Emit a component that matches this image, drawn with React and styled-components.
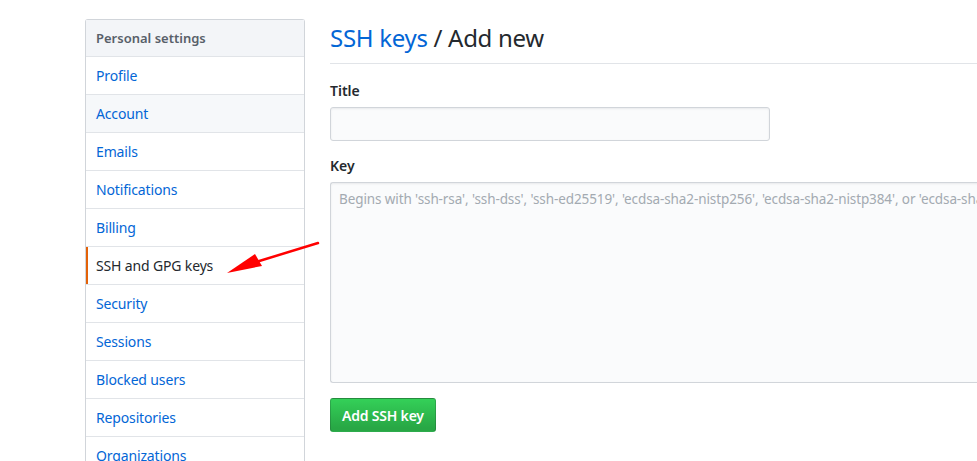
import styled, { createGlobalStyle } from "styled-components";

const GlobalStyle = createGlobalStyle`
  html, body {
    margin: 0;
    padding: 0;
    background: #fff;
    overflow: hidden;
  }
  body {
    font-family: "Noto Sans", "Open Sans", sans-serif;
    font-size: 14px;
    color: #24292e;
  }
`;

const menuItems = [
  "Profile",
  "Account",
  "Emails",
  "Notifications",
  "Billing",
  "SSH and GPG keys",
  "Security",
  "Sessions",
  "Blocked users",
  "Repositories",
  "Organizations",
];

export default function App() {
  return (
    <Page>
      <GlobalStyle />
      <Sidebar>
        <MenuHeading>Personal settings</MenuHeading>
        {menuItems.map((item) => (
          <MenuItem
            key={item}
            $selected={item === "SSH and GPG keys"}
            $hovered={item === "Account"}
          >
            {item}
          </MenuItem>
        ))}
      </Sidebar>

      <Main>
        <Subhead>
          <HeadLink>SSH keys</HeadLink> / Add new
        </Subhead>
        <Form>
          <Field>
            <Label>Title</Label>
            <TitleInput />
          </Field>
          <Field>
            <Label>Key</Label>
            <KeyArea placeholder="Begins with 'ssh-rsa', 'ssh-dss', 'ssh-ed25519', 'ecdsa-sha2-nistp256', 'ecdsa-sha2-nistp384', or 'ecdsa-sha2-nistp521'" />
          </Field>
          <SubmitButton>Add SSH key</SubmitButton>
        </Form>
      </Main>

      <Arrow width="100" height="40" viewBox="0 0 100 40">
        <line x1="92" y1="3" x2="30" y2="22" stroke="#f00" strokeWidth="2.5" strokeLinecap="round" />
        <polygon points="1,33 29,14 36,26" fill="#f00" />
      </Arrow>
    </Page>
  );
}

const Page = styled.div`
  position: relative;
  display: flex;
  gap: 25px;
  padding: 19px 0 0 85px;
  height: 461px;
  box-sizing: border-box;
  width: 1200px;
`;

const Sidebar = styled.nav`
  width: 220px;
  flex-shrink: 0;
  border: 1px solid #d1d5da;
  border-radius: 3px;
  border-bottom: none;
  align-self: flex-start;
  box-sizing: border-box;
`;

const MenuHeading = styled.div`
  height: 37px;
  display: flex;
  align-items: center;
  padding: 0 10px 1px;
  box-sizing: border-box;
  background: #f3f5f8;
  border-bottom: 1px solid #e1e4e8;
  color: #586069;
  font-size: 13px;
  font-weight: 600;
`;

const MenuItem = styled.div`
  height: 38px;
  box-sizing: border-box;
  display: flex;
  align-items: center;
  padding: 0 10px 1px;
  border-bottom: 1px solid #e1e4e8;
  font-size: 14px;
  letter-spacing: -0.15px;
  color: ${(p) => (p.$selected ? "#24292e" : "#0366d6")};
  background: ${(p) => (p.$hovered ? "#f6f8fa" : "#fff")};
  box-shadow: ${(p) => (p.$selected ? "inset 2px 0 0 #e36209" : "none")};
`;

const Main = styled.main`
  flex: 1;
  display: flex;
  flex-direction: column;
`;

const Subhead = styled.h2`
  margin: 0;
  padding: 3px 0 9px;
  border-bottom: 1px solid #e1e4e8;
  font-size: 24px;
  font-weight: 400;
  letter-spacing: -0.3px;
  line-height: 32px;
  color: #24292e;
`;

const HeadLink = styled.span`
  color: #0366d6;
`;

const Form = styled.div`
  display: flex;
  flex-direction: column;
  align-items: flex-start;
  padding-top: 17px;
`;

const Field = styled.div`
  display: flex;
  flex-direction: column;
  align-self: stretch;
  margin-bottom: 15px;
`;

const Label = styled.label`
  font-size: 14px;
  font-weight: 600;
  line-height: 20px;
  margin-bottom: 6px;
`;

const TitleInput = styled.input`
  width: 440px;
  height: 34px;
  box-sizing: border-box;
  border: 1px solid #d1d5da;
  border-radius: 3px;
  background: #fafbfc;
  box-shadow: inset 0 1px 2px rgba(27, 31, 35, 0.075);
  font-family: inherit;
  font-size: 14px;
  padding: 6px 8px;
`;

const KeyArea = styled.textarea`
  width: 100%;
  height: 201px;
  box-sizing: border-box;
  border: 1px solid #d1d5da;
  border-radius: 3px;
  border-right: none;
  background: #fafbfc;
  box-shadow: inset 0 1px 2px rgba(27, 31, 35, 0.075);
  font-family: inherit;
  font-size: 13.5px;
  letter-spacing: -0.1px;
  line-height: 20px;
  padding: 6px 8px;
  resize: none;
  white-space: nowrap;
  overflow: hidden;

  &::placeholder {
    color: #a3aab1;
  }
`;

const SubmitButton = styled.button`
  height: 34px;
  padding: 0 11px;
  border: 1px solid rgba(27, 31, 35, 0.2);
  border-radius: 3px;
  background: linear-gradient(-180deg, #34d058 0%, #28a745 90%);
  color: #fff;
  font-family: inherit;
  font-size: 14px;
  font-weight: 600;
  letter-spacing: -0.2px;
`;

const Arrow = styled.svg`
  position: absolute;
  left: 226px;
  top: 240px;
`;
